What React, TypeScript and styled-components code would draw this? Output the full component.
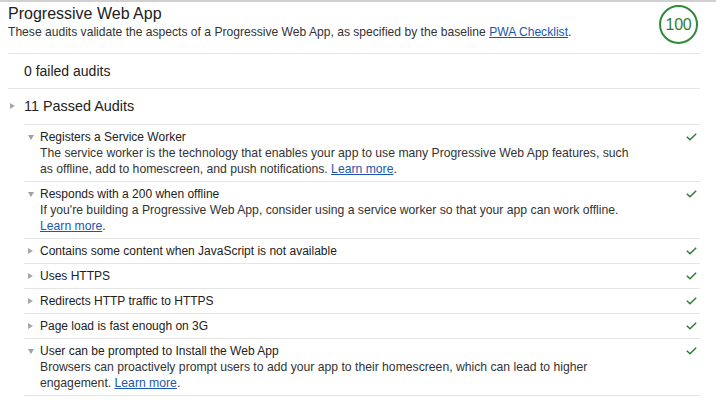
import React from "react";
import styled, { createGlobalStyle } from "styled-components";

const GlobalStyle = createGlobalStyle`
  html, body { margin: 0; padding: 0; background: #fff; }
  body {
    font-family: "Liberation Sans", Arial, Helvetica, sans-serif;
    color: #333;
    -webkit-font-smoothing: antialiased;
  }
`;

const Section = styled.section`
  border-top: 2px solid #d0d0d0;
  padding: 0 16px 0 8px;
  width: 716px;
  box-sizing: border-box;
`;

const Header = styled.header`
  display: flex;
  align-items: flex-start;
  justify-content: space-between;
  padding: 2px 0 9px;
  border-bottom: 1px solid #e6e6e6;
`;

const HeaderText = styled.div`
  display: flex;
  flex-direction: column;
`;

const Title = styled.h1`
  margin: 0;
  font-size: 16px;
  line-height: 20px;
  font-weight: normal;
  color: #212121;
`;

const Description = styled.p`
  margin: 0;
  font-size: 12.1px;
  line-height: 16px;
  color: #333;
`;

const Link = styled.a`
  color: #1a56b0;
  text-decoration: underline;
`;

const Score = styled.div`
  width: 39px;
  height: 39px;
  margin-top: 1px;
  margin-right: 2px;
  border: 2px solid #2e8b3a;
  border-radius: 50%;
  box-sizing: border-box;
  display: flex;
  align-items: center;
  justify-content: center;
  color: #2e7d32;
  font-size: 16px;
  letter-spacing: -0.3px;
`;

const GroupRow = styled.div`
  font-size: 14px;
  line-height: 18px;
  padding: 8px 0 8px 16px;
  border-bottom: 1px solid #e6e6e6;
  color: #212121;
`;

const Group = styled.div``;

const GroupSummary = styled.div`
  display: flex;
  align-items: center;
  font-size: 14.4px;
  line-height: 18px;
  padding: 8px 0 9px;
  color: #212121;
`;

const Caret = styled.span<{ $open?: boolean; $size?: number }>`
  display: inline-block;
  width: 0;
  height: 0;
  ${({ $open, $size = 6 }) =>
    $open
      ? `border-left: ${$size / 2 + 0.5}px solid transparent;
         border-right: ${$size / 2 + 0.5}px solid transparent;
         border-top: ${$size - 1}px solid #a0a0a0;`
      : `border-top: ${$size / 2 + 0.5}px solid transparent;
         border-bottom: ${$size / 2 + 0.5}px solid transparent;
         border-left: ${$size - 1}px solid #a8a8a8;`}
`;

const CaretBox = styled.span`
  width: 16px;
  display: flex;
  align-items: center;
  padding-left: 2px;
  box-sizing: border-box;
`;

const AuditList = styled.div`
  margin-left: 16px;
`;

const Audit = styled.div`
  display: grid;
  grid-template-columns: 16px 1fr 60px;
  border-top: 1px solid #e6e6e6;
  padding: 4px 0;
  font-size: 12px;
  line-height: 16px;
  &:last-child {
    border-bottom: 1px solid #e6e6e6;
  }
`;

const AuditCaret = styled.span`
  height: 16px;
  display: flex;
  align-items: center;
  padding-left: 4px;
`;

const AuditBody = styled.div`
  display: flex;
  flex-direction: column;
`;

const AuditTitle = styled.div`
  color: #212121;
`;

const AuditDesc = styled.div`
  color: #333;
  font-size: 12.2px;
`;

const Pass = styled.span`
  display: flex;
  justify-content: flex-end;
  align-items: center;
  height: 16px;
  padding-right: 3px;
`;

const Check = () => (
  <svg width="11" height="8" viewBox="0 0 11 8" fill="none">
    <path d="M0.8 3.8 L4 6.8 L10.2 0.8" stroke="#2a7f36" strokeWidth="1.5" />
  </svg>
);

type AuditItem = { title: string; desc?: React.ReactNode };

const audits: AuditItem[] = [
  {
    title: "Registers a Service Worker",
    desc: (
      <>
        The service worker is the technology that enables your app to use many Progressive Web App features, such
        as offline, add to homescreen, and push notifications. <Link href="#">Learn more</Link>.
      </>
    ),
  },
  {
    title: "Responds with a 200 when offline",
    desc: (
      <>
        If you're building a Progressive Web App, consider using a service worker so that your app can work offline.{" "}
        <Link href="#">Learn more</Link>.
      </>
    ),
  },
  { title: "Contains some content when JavaScript is not available" },
  { title: "Uses HTTPS" },
  { title: "Redirects HTTP traffic to HTTPS" },
  { title: "Page load is fast enough on 3G" },
  {
    title: "User can be prompted to Install the Web App",
    desc: (
      <>
        Browsers can proactively prompt users to add your app to their homescreen, which can lead to higher
        engagement. <Link href="#">Learn more</Link>.
      </>
    ),
  },
];

export default function App() {
  return (
    <>
      <GlobalStyle />
      <Section>
        <Header>
          <HeaderText>
            <Title>Progressive Web App</Title>
            <Description>
              These audits validate the aspects of a Progressive Web App, as specified by the baseline{" "}
              <Link href="#">PWA Checklist</Link>.
            </Description>
          </HeaderText>
          <Score>100</Score>
        </Header>
        <GroupRow>0 failed audits</GroupRow>
        <Group>
          <GroupSummary>
            <CaretBox>
              <Caret $size={6} />
            </CaretBox>
            11 Passed Audits
          </GroupSummary>
          <AuditList>
            {audits.map((a) => (
              <Audit key={a.title}>
                <AuditCaret>
                  <Caret $open={!!a.desc} $size={6} />
                </AuditCaret>
                <AuditBody>
                  <AuditTitle>{a.title}</AuditTitle>
                  {a.desc && <AuditDesc>{a.desc}</AuditDesc>}
                </AuditBody>
                <Pass>
                  <Check />
                </Pass>
              </Audit>
            ))}
          </AuditList>
        </Group>
      </Section>
    </>
  );
}
